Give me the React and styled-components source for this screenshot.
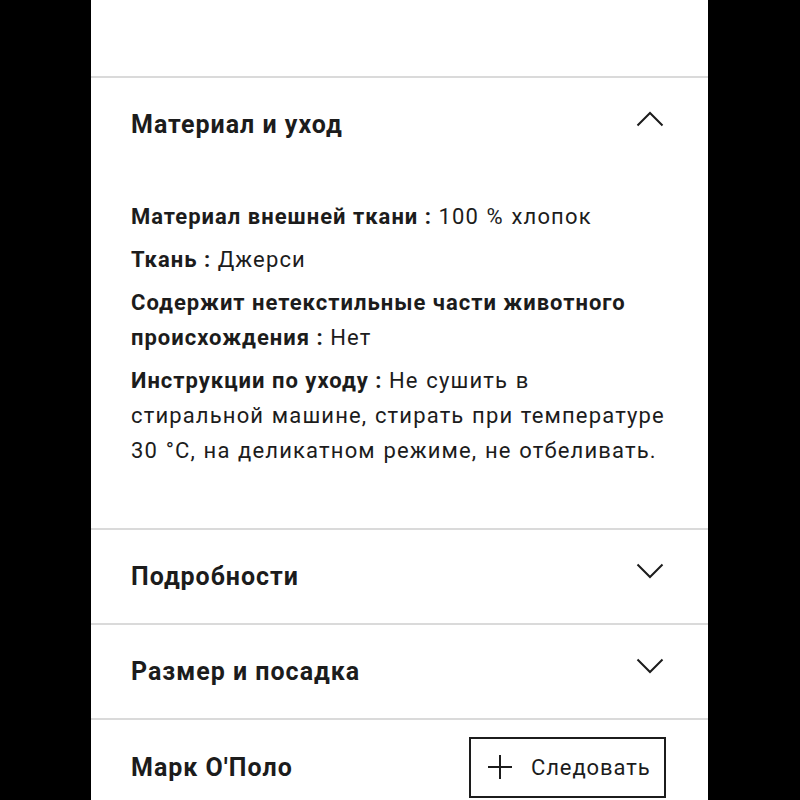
import styled, { createGlobalStyle } from 'styled-components';

const GlobalStyle = createGlobalStyle`
  html, body {
    margin: 0;
    padding: 0;
    background: #000;
  }

  body {
    font-family: Roboto, 'Noto Sans', sans-serif;
    color: #1c1c1c;
  }
`;

// line breaks in values follow the original layout
const details = [
  { label: 'Материал внешней ткани', value: '100 % хлопок' },
  { label: 'Ткань', value: 'Джерси' },
  { label: 'Содержит нетекстильные части животного происхождения', value: 'Нет' },
  {
    label: 'Инструкции по уходу',
    value: 'Не сушить в\nстиральной машине, стирать при температуре 30 °C, на деликатном режиме, не отбеливать.',
  },
];

const Chevron = ({ up }) => (
  <ChevronIcon viewBox="0 0 28 16" $up={up}>
    <polyline points="1.5,14.5 14,2 26.5,14.5" />
  </ChevronIcon>
);

const PlusIcon = () => (
  <PlusSvg viewBox="0 0 26 26">
    <line x1="13" y1="1" x2="13" y2="25" />
    <line x1="1" y1="13" x2="25" y2="13" />
  </PlusSvg>
);

const App = () => {
  return (
    <>
      <GlobalStyle />
      <Panel>
        <TopSpace />

        <Section>
          <SectionHeader>
            <Title>Материал и уход</Title>
            <Chevron up />
          </SectionHeader>
          <Content>
            {details.map((item) => (
              <DetailRow key={item.label}>
                <strong>{item.label} :</strong> <span>{item.value}</span>
              </DetailRow>
            ))}
          </Content>
        </Section>

        <Section>
          <SectionHeader>
            <Title>Подробности</Title>
            <Chevron />
          </SectionHeader>
        </Section>

        <Section>
          <SectionHeader>
            <Title>Размер и посадка</Title>
            <Chevron />
          </SectionHeader>
        </Section>

        <Section>
          <BrandRow>
            <Title>Марк О'Поло</Title>
            <FollowButton>
              <PlusIcon />
              Следовать
            </FollowButton>
          </BrandRow>
        </Section>
      </Panel>
    </>
  );
};

const Panel = styled.main`
  margin-left: 91px;
  width: 617px;
  min-height: 800px;
  background: #fff;
  overflow: hidden;
`;

const TopSpace = styled.div`
  height: 76px;
`;

const Section = styled.section`
  border-top: 2px solid #dadada;
`;

const SectionHeader = styled.div`
  height: 93px;
  padding: 0 44px 0 40px;
  display: flex;
  align-items: center;
  justify-content: space-between;
`;

const Title = styled.h3`
  margin: 0;
  font-size: 25px;
  font-weight: 700;
  color: #1c1c1c;
  letter-spacing: 1px;
`;

const ChevronIcon = styled.svg`
  width: 28px;
  height: 16px;
  margin-bottom: 11px;
  transform: ${(p) => (p.$up ? 'none' : 'rotate(180deg)')};

  polyline {
    fill: none;
    stroke: #1c1c1c;
    stroke-width: 2;
  }
`;

const Content = styled.div`
  padding: 28px 30px 60px 40px;
  display: flex;
  flex-direction: column;
  gap: 8px;
`;

const DetailRow = styled.p`
  margin: 0;
  font-size: 22px;
  line-height: 35px;
  letter-spacing: 1px;
  color: #1c1c1c;
  white-space: pre-line;

  strong {
    font-weight: 700;
  }

  span {
    letter-spacing: 1.15px;
    word-spacing: 1px;
  }
`;

const BrandRow = styled.div`
  height: 94px;
  padding: 0 42px 0 40px;
  display: flex;
  align-items: center;
  justify-content: space-between;
`;

const FollowButton = styled.button`
  width: 197px;
  height: 61px;
  padding: 0 12px 0 16px;
  display: flex;
  align-items: center;
  gap: 18px;
  background: #fff;
  border: 2px solid #1c1c1c;
  border-radius: 0;
  font-family: Roboto, 'Noto Sans', sans-serif;
  font-size: 22px;
  letter-spacing: 0.9px;
  color: #1c1c1c;
`;

const PlusSvg = styled.svg`
  width: 26px;
  height: 26px;
  flex-shrink: 0;

  line {
    stroke: #1c1c1c;
    stroke-width: 2;
  }
`;

export default App;
